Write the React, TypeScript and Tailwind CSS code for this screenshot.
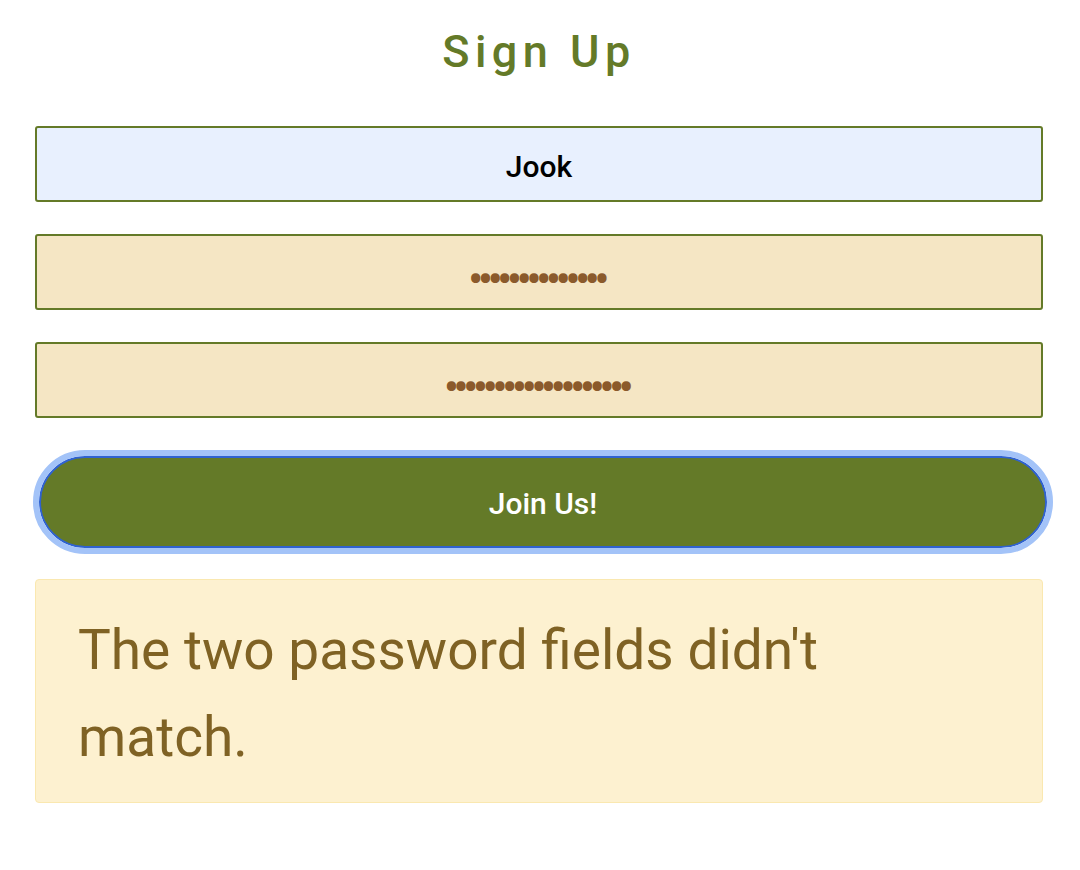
import { useState } from "react";

export default function App() {
  const [username, setUsername] = useState("Jook");
  const [pw1, setPw1] = useState("aaaaaaaaaaaaaa");
  const [pw2, setPw2] = useState("aaaaaaaaaaaaaaaaaaa");

  return (
    <div
      className="min-h-[870px] bg-white pl-[35px] pr-[37px] pt-[24px]"
      style={{ fontFamily: "Roboto, 'Open Sans', sans-serif" }}
    >
      <h1 className="text-center text-[45px] leading-[56px] tracking-[5.5px] text-[#647a28] font-medium">
        Sign Up
      </h1>

      <form className="mt-[46px] flex flex-col" onSubmit={(e) => e.preventDefault()}>
        <input
          type="text"
          value={username}
          onChange={(e) => setUsername(e.target.value)}
          className="h-[76px] w-full rounded-[3px] border-2 border-[#647a28] bg-[#e8f0fe] pt-[4px] text-center text-[30px] font-medium text-black outline-none"
        />
        <input
          type="password"
          value={pw1}
          onChange={(e) => setPw1(e.target.value)}
          className="mt-[32px] h-[76px] w-full rounded-[3px] border-2 border-[#647a28] bg-[#f5e6c4] pt-[14px] pr-[6px] text-center text-[46px] tracking-[-5.8px] text-[#8b5a2b] outline-none"
        />
        <input
          type="password"
          value={pw2}
          onChange={(e) => setPw2(e.target.value)}
          className="mt-[32px] h-[76px] w-full rounded-[3px] border-2 border-[#647a28] bg-[#f5e6c4] pt-[14px] pr-[6px] text-center text-[46px] tracking-[-5.8px] text-[#8b5a2b] outline-none"
        />
        <button
          type="submit"
          className="ml-[4px] mt-[38px] h-[92px] w-full rounded-full border-2 border-[#2f62d0] bg-[#647a28] pt-[2px] text-[30px] font-medium text-white outline-[6px] outline-solid outline-[#a3c3f8]"
        >
          Join Us!
        </button>
      </form>

      <div className="mt-[31px] rounded-[4px] border border-[#fae8b0] bg-[#fdf1d0] px-[42px] pt-[27px] pb-[21px]">
        <p className="text-[55px] leading-[87px] text-[#7f6224]">
          The two password fields didn't
          <br />
          match.
        </p>
      </div>
    </div>
  );
}
